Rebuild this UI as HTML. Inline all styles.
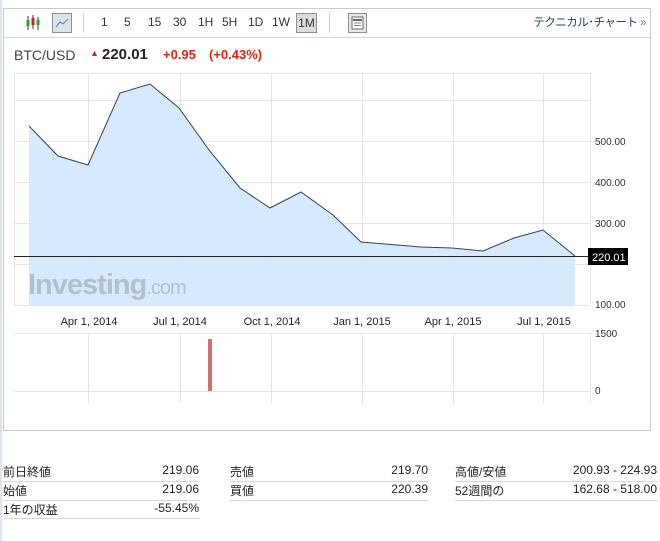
<!DOCTYPE html>
<html><head><meta charset="utf-8"><style>
body{margin:0;width:660px;height:541px;background:#fff;position:relative;overflow:hidden;font-family:"Liberation Sans","Noto Sans CJK JP",sans-serif;}
.a{position:absolute;white-space:nowrap}
.frame{position:absolute;left:3px;top:8px;width:648px;height:423px;border:1px solid #c9cdd3;box-sizing:border-box}
.tb{font-size:12px;color:#333;top:15px}
.row{position:absolute;height:1px;background:#d8d8d8}
.t{font-size:12px;color:#222}
</style></head><body>
<div class="a" style="left:0;top:0;width:2px;height:541px;background:#dbe6f2"></div>
<div class="frame"></div>
<div class="a" style="left:4px;top:37px;width:646px;height:1px;background:#d5d8dc"></div>
<svg class="a" style="left:25px;top:14px" width="16" height="18"><line x1="3" y1="2" x2="3" y2="16" stroke="#333"/><rect x="1.5" y="6" width="3" height="6" fill="#2a2" /><line x1="8" y1="1" x2="8" y2="15" stroke="#333"/><rect x="6.5" y="4" width="3" height="7" fill="#c22"/><line x1="13" y1="3" x2="13" y2="16" stroke="#333"/><rect x="11.5" y="6" width="3" height="5" fill="#2a2"/></svg>
<div class="a" style="left:52px;top:13px;width:20px;height:20px;border:1px solid #8a9099;background:#dde3ea;box-sizing:border-box"></div>
<svg class="a" style="left:52px;top:13px" width="20" height="20"><polyline points="4,14 8,9 11,11 16,6" fill="none" stroke="#6a8ab0" stroke-width="1.2"/></svg>
<div class="a" style="left:83px;top:13px;width:1px;height:20px;background:#d0d0d0"></div>
<div class="a tb" style="left:101px">1</div>
<div class="a tb" style="left:124px">5</div>
<div class="a tb" style="left:148px">15</div>
<div class="a tb" style="left:173px">30</div>
<div class="a tb" style="left:198px">1H</div>
<div class="a tb" style="left:222px">5H</div>
<div class="a tb" style="left:248px">1D</div>
<div class="a tb" style="left:272px">1W</div>
<div class="a tb" style="left:296px;top:13px;width:21px;height:20px;border:1px solid #8a9099;background:#dcdcdc;box-sizing:border-box;text-align:center;line-height:18px">1M</div>
<div class="a" style="left:329px;top:13px;width:1px;height:20px;background:#d0d0d0"></div>
<div class="a" style="left:348px;top:13px;width:19px;height:20px;border:1px solid #8a9099;background:#e8e8e8;box-sizing:border-box"></div>
<svg class="a" style="left:348px;top:13px" width="19" height="20"><rect x="4" y="4" width="11" height="12" fill="#fff" stroke="#666"/><line x1="5" y1="7" x2="14" y2="7" stroke="#666" stroke-width="2"/><line x1="6" y1="10" x2="13" y2="10" stroke="#888"/><line x1="6" y1="12.5" x2="13" y2="12.5" stroke="#888"/></svg>
<div class="a" style="right:14px;top:14px;font-size:11.5px;color:#1f3e78;letter-spacing:-0.5px">テクニカル･チャート <span style="color:#777">»</span></div>
<div class="a" style="left:14px;top:47px;font-size:14px;color:#444">BTC/USD</div>
<div class="a" style="left:90px;top:48px;font-size:9px;color:#d22">▲</div>
<div class="a" style="left:102px;top:46px;font-size:15px;font-weight:bold;color:#222">220.01</div>
<div class="a" style="left:163px;top:47px;font-size:13px;font-weight:bold;color:#e21">+0.95</div>
<div class="a" style="left:209px;top:47px;font-size:13px;font-weight:bold;color:#e21">(+0.43%)</div>
<svg class="a" style="left:0;top:0" width="660" height="440">
<g stroke="#e6e6e6" stroke-width="1">
<line x1="14" y1="73.5" x2="590" y2="73.5"/><line x1="14" y1="100.5" x2="590" y2="100.5"/><line x1="14" y1="141.5" x2="590" y2="141.5"/><line x1="14" y1="182.5" x2="590" y2="182.5"/><line x1="14" y1="223.5" x2="590" y2="223.5"/><line x1="14" y1="264.5" x2="590" y2="264.5"/><line x1="14" y1="305.5" x2="590" y2="305.5"/>
<line x1="14" y1="333.5" x2="590" y2="333.5"/>
<line x1="14.5" y1="73" x2="14.5" y2="305"/>
<line x1="88.5" y1="73" x2="88.5" y2="305"/><line x1="180.5" y1="73" x2="180.5" y2="305"/><line x1="271.5" y1="73" x2="271.5" y2="305"/><line x1="362.5" y1="73" x2="362.5" y2="305"/><line x1="453.5" y1="73" x2="453.5" y2="305"/><line x1="543.5" y1="73" x2="543.5" y2="305"/><line x1="590.5" y1="73" x2="590.5" y2="305"/>
<line x1="88.5" y1="333" x2="88.5" y2="403"/><line x1="180.5" y1="333" x2="180.5" y2="403"/><line x1="271.5" y1="333" x2="271.5" y2="403"/><line x1="362.5" y1="333" x2="362.5" y2="403"/><line x1="453.5" y1="333" x2="453.5" y2="403"/><line x1="543.5" y1="333" x2="543.5" y2="403"/><line x1="590.5" y1="333" x2="590.5" y2="403"/>
<line x1="14" y1="391.5" x2="590" y2="391.5"/>
</g>
<polygon points="29,126 58,156 88,165 120,93 150,84 179,108 209,150 240,188 270,208 301,192 333,215 361,242 421,247 452,248 483,251 514,238 543,230 575,256 575,305 29,305" fill="#d5e8fc" fill-opacity="0.95"/>
<polyline points="29,126 58,156 88,165 120,93 150,84 179,108 209,150 240,188 270,208 301,192 333,215 361,242 421,247 452,248 483,251 514,238 543,230 575,256" fill="none" stroke="#34405a" stroke-width="1"/>
<text x="28" y="294" font-family="Liberation Sans" font-weight="bold" font-size="29" fill="#b4c0cf" letter-spacing="-1">Investing<tspan font-weight="normal" font-size="20">.com</tspan></text>
<line x1="14" y1="256.5" x2="590" y2="256.5" stroke="#222" stroke-width="1"/>
<rect x="588" y="248" width="40" height="17" fill="#000"/>
<text x="592" y="261" font-family="Liberation Sans" font-size="11" fill="#fff">220.01</text>
<g font-family="Liberation Sans" font-size="10" fill="#333">
<text x="595" y="145">500.00</text><text x="595" y="186">400.00</text><text x="595" y="227">300.00</text><text x="595" y="308">100.00</text>
<text x="595" y="337">1500</text><text x="595" y="394">0</text>
</g>
<g font-family="Liberation Sans" font-size="11" fill="#222" text-anchor="middle">
<text x="89" y="325">Apr 1, 2014</text><text x="180" y="325">Jul 1, 2014</text><text x="272" y="325">Oct 1, 2014</text><text x="362" y="325">Jan 1, 2015</text><text x="453" y="325">Apr 1, 2015</text><text x="544" y="325">Jul 1, 2015</text>
</g>
<rect x="208" y="339" width="4" height="52" fill="#d07070"/>
</svg>
<div class="a t" style="left:3px;top:463px">前日終値</div><div class="a t" style="right:461px;top:463px">219.06</div>
<div class="a t" style="left:3px;top:482px">始値</div><div class="a t" style="right:461px;top:482px">219.06</div>
<div class="a t" style="left:3px;top:501px">1年の収益</div><div class="a t" style="right:461px;top:501px">-55.45%</div>
<div class="row" style="left:3px;width:197px;top:481px"></div><div class="row" style="left:3px;width:197px;top:500px"></div><div class="row" style="left:3px;width:197px;top:518px"></div>
<div class="a t" style="left:230px;top:463px">売値</div><div class="a t" style="right:232px;top:463px">219.70</div>
<div class="a t" style="left:230px;top:482px">買値</div><div class="a t" style="right:232px;top:482px">220.39</div>
<div class="row" style="left:230px;width:198px;top:481px"></div><div class="row" style="left:230px;width:198px;top:500px"></div>
<div class="a t" style="left:455px;top:463px">高値/安値</div><div class="a t" style="right:3px;top:463px">200.93 - 224.93</div>
<div class="a t" style="left:455px;top:482px">52週間の</div><div class="a t" style="right:3px;top:482px">162.68 - 518.00</div>
<div class="row" style="left:455px;width:203px;top:481px"></div><div class="row" style="left:455px;width:203px;top:500px"></div>
</body></html>
